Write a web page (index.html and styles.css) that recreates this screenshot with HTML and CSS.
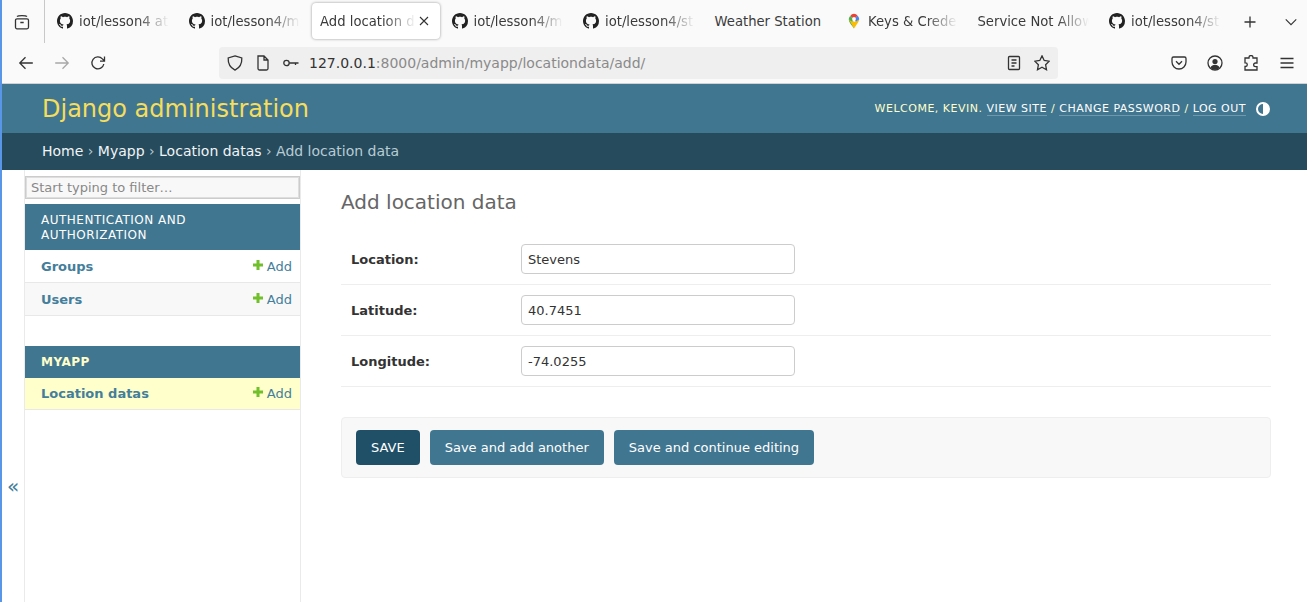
FILE: index.html
```html
<!DOCTYPE html>
<html lang="en">
<head>
<meta charset="utf-8">
<title>Add location data | Django site admin</title>
<link rel="stylesheet" href="styles.css">
</head>
<body>
<svg class="defs" width="0" height="0" aria-hidden="true">
  <symbol id="gh" viewBox="0 0 16 16"><path fill="#222" d="M8 0C3.58 0 0 3.58 0 8c0 3.54 2.29 6.53 5.47 7.59.4.07.55-.17.55-.38 0-.19-.01-.82-.01-1.49-2.01.37-2.53-.49-2.69-.94-.09-.23-.48-.94-.82-1.13-.28-.15-.68-.52-.01-.53.63-.01 1.08.58 1.23.82.72 1.21 1.87.87 2.33.66.07-.52.28-.87.51-1.07-1.78-.2-3.64-.89-3.64-3.95 0-.87.31-1.59.82-2.15-.08-.2-.36-1.02.08-2.12 0 0 .67-.21 2.2.82.64-.18 1.32-.27 2-.27.68 0 1.36.09 2 .27 1.53-1.04 2.2-.82 2.2-.82.44 1.1.16 1.92.08 2.12.51.56.82 1.27.82 2.15 0 3.07-1.87 3.75-3.65 3.95.29.25.54.73.54 1.48 0 1.07-.01 1.93-.01 2.2 0 .21.15.46.55.38A8.013 8.013 0 0016 8c0-4.42-3.58-8-8-8z"/></symbol>
  <symbol id="plus" viewBox="0 0 12 12"><path fill="#70bf2b" d="M4.500 1h3v3.500H11v3H7.500V11h-3V7.500H1v-3h3.500z"/></symbol>
</svg>
<div class="window">
  <header class="chrome">
    <div class="tabbar">
      <div class="views">
        <svg class="ico" viewBox="0 0 16 16"><path d="M3 2.500C4 1.200 12 1.200 13 2.500M3 4.800h10a1.500 1.500 0 0 1 1.500 1.500v7a1.500 1.500 0 0 1-1.500 1.500H3a1.500 1.500 0 0 1-1.500-1.500v-7A1.500 1.500 0 0 1 3 4.800zM6.300 8.500h3.400"/></svg>
      </div>
      <div class="tab"><svg class="fav"><use href="#gh"/></svg><span class="tt">iot/lesson4 at</span></div>
      <div class="tab"><svg class="fav"><use href="#gh"/></svg><span class="tt">iot/lesson4/m</span></div>
      <div class="tab active"><span class="tt">Add location d</span><svg class="close" viewBox="0 0 16 16"><path d="M4 4l8 8M12 4l-8 8"/></svg></div>
      <div class="tab"><svg class="fav"><use href="#gh"/></svg><span class="tt">iot/lesson4/m</span></div>
      <div class="tab"><svg class="fav"><use href="#gh"/></svg><span class="tt">iot/lesson4/st</span></div>
      <div class="tab"><span class="tt nofade">Weather Station</span></div>
      <div class="tab"><svg class="fav" viewBox="0 0 16 16"><path fill="#34a853" d="M8 15.500C6.800 13 3 10 2.800 6.500L8 9z"/><path fill="#fbbc04" d="M2.800 6.500 8 9l5.200-2.500C13 8 12 9.500 11 11L8 15.500z"/><path fill="#4285f4" d="M13.200 6.500c0-1.500-.6-2.800-1.600-3.700L8 6.500 10 8.500z"/><path fill="#ea4335" d="M8 .8c1.500 0 2.700.7 3.600 2L8 6.500 4.300 3C5.200 1.600 6.500.8 8 .8z"/><path fill="#4caf50" d="M4.300 3C3.300 3.900 2.800 5.100 2.800 6.500L5.800 8.600 8 6.500z"/><circle cx="8" cy="6" r="1.900" fill="#fff"/></svg><span class="tt">Keys &amp; Crede</span></div>
      <div class="tab"><span class="tt">Service Not Allow</span></div>
      <div class="tab"><svg class="fav"><use href="#gh"/></svg><span class="tt">iot/lesson4/st</span></div>
      <div class="tabctl">
        <svg class="ico" viewBox="0 0 16 16"><path d="M8 2.500v11M2.500 8h11"/></svg>
        <svg class="ico chev" viewBox="0 0 16 16"><path d="M2 5 8 11l6-6"/></svg>
      </div>
    </div>
    <div class="toolbar">
      <div class="nav-btns">
        <svg class="ico" viewBox="0 0 16 16"><path d="M14.800 8H1.800M7.500 2.300 1.800 8l5.700 5.700"/></svg>
        <svg class="ico dim" viewBox="0 0 16 16"><path d="M1.200 8h13M8.500 2.300 14.200 8l-5.700 5.700"/></svg>
        <svg class="ico" viewBox="0 0 16 16"><path d="M13.800 9a6 6 0 1 1-1.400-5.100L14.500 6M14.500 1.500V6.200H10"/></svg>
      </div>
      <div class="urlbar">
        <svg class="ico" viewBox="0 0 16 16"><path d="M8 .9 14.800 3c.3 5.500-1.800 9.600-6.800 12.100C3 12.600.9 8.500 1.200 3z"/></svg>
        <svg class="ico" viewBox="0 0 16 16"><path d="M3 1h6l4 4v8.500a1.500 1.500 0 0 1-1.500 1.500h-7A1.500 1.500 0 0 1 3 13.500zM9 1v4h4"/></svg>
        <svg class="ico" viewBox="0 0 16 16"><circle cx="3.500" cy="8" r="2.700"/><path d="M6.200 8h9.300M12.500 8v2"/></svg>
        <div class="url"><span class="host">127.0.0.1</span>:8000/admin/myapp/locationdata/add/</div>
        <svg class="ico" viewBox="0 0 16 16"><path d="M3.500 1.500h9a1 1 0 0 1 1 1v11a1 1 0 0 1-1 1h-9a1 1 0 0 1-1-1v-11a1 1 0 0 1 1-1zM5.500 5h5M5.500 8h5M5.500 11h3"/></svg>
        <svg class="ico" viewBox="0 0 16 16"><path d="M8 .9l2.200 4.600 5 .7-3.600 3.500.9 5L8 12.300l-4.500 2.400.9-5L.8 6.200l5-.7z"/></svg>
      </div>
      <div class="tools">
        <svg class="ico" viewBox="0 0 16 16"><path d="M2.500 2h11A1.500 1.500 0 0 1 15 3.500V7a7 7 0 0 1-14 0V3.500A1.500 1.500 0 0 1 2.500 2zM5 6.300 8 9.300l3-3"/></svg>
        <svg class="ico" viewBox="0 0 16 16"><circle cx="8" cy="8" r="7"/><circle class="solid" cx="8" cy="6.500" r="2.600"/><path class="solid" d="M3.500 12.500c.8-2 2.500-2.800 4.500-2.800s3.700.8 4.500 2.800C11.300 14 9.700 14.700 8 14.700s-3.300-.7-4.500-2.200z"/></svg>
        <svg class="ico" viewBox="0 0 16 16"><path d="M6 3V2.500a2 2 0 0 1 4 0V3h4v5h-1.500a1.800 1.800 0 0 0 0 3.700H14v3.300H2v-3.500h.5a1.800 1.800 0 0 0 0-3.600H2V3z"/></svg>
        <svg class="ico" viewBox="0 0 16 16"><path d="M1.500 3.500h13M1.500 8h13M1.500 12.500h13"/></svg>
      </div>
    </div>
  </header>

  <div class="admin">
    <div class="branding">
      <a class="site-name">Django administration</a>
      <div class="user-tools">
        <span class="welcome">Welcome, <strong>Kevin</strong>.</span>
        <a class="utl">View site</a> / <a class="utl">Change password</a> / <a class="utl">Log out</a>
        <svg class="theme" viewBox="0 0 16 16"><circle cx="8" cy="8" r="6" fill="none" stroke="#fff" stroke-width="2"/><path fill="#fff" d="M8 2a6 6 0 0 1 0 12z"/></svg>
      </div>
    </div>
    <div class="breadcrumbs"><a>Home</a> › <a>Myapp</a> › <a>Location datas</a> › <span class="crumb-now">Add location data</span></div>

    <div class="main">
      <div class="toggle">«</div>
      <aside class="sidebar">
        <input class="filter" placeholder="Start typing to filter…">
        <section class="module">
          <div class="caption">Authentication and Authorization</div>
          <div class="row"><a class="model">Groups</a><a class="addlink"><svg class="plus"><use href="#plus"/></svg>Add</a></div>
          <div class="row alt"><a class="model">Users</a><a class="addlink"><svg class="plus"><use href="#plus"/></svg>Add</a></div>
        </section>
        <section class="module">
          <div class="caption current">Myapp</div>
          <div class="row selected"><a class="model">Location datas</a><a class="addlink"><svg class="plus"><use href="#plus"/></svg>Add</a></div>
        </section>
      </aside>
      <main class="content">
        <h1 class="title">Add location data</h1>
        <form class="form">
          <div class="form-row"><label class="lbl">Location:</label><input class="field" value="Stevens"></div>
          <div class="form-row"><label class="lbl">Latitude:</label><input class="field" value="40.7451"></div>
          <div class="form-row"><label class="lbl">Longitude:</label><input class="field" value="-74.0255"></div>
          <div class="submit-row">
            <button type="button" class="btn default">SAVE</button>
            <button type="button" class="btn">Save and add another</button>
            <button type="button" class="btn">Save and continue editing</button>
          </div>
        </form>
      </main>
    </div>
  </div>
</div>
</body>
</html>
```

FILE: styles.css
```css
* { box-sizing: border-box; }
html, body { margin: 0; height: 100%; overflow: hidden; }
body { font-family: "DejaVu Sans", sans-serif; background: #fff; color: #333; }
.defs { position: absolute; }
.window { height: 602px; border-left: 2px solid #5a96e8; overflow: hidden; }

.chrome { height: 84px; background: #fafafa; border-bottom: 1px solid #d2d2d4; color: #3a3a3a; font-size: 13.200px; }
.ico { width: 16px; height: 16px; fill: none; stroke: #333; stroke-width: 1.300; flex: none; }
.ico.dim { stroke: #a8a8a8; }
.ico .solid { fill: #333; stroke: none; }

.tabbar { display: flex; height: 43px; }
.views { width: 43px; border-right: 1px solid #c8c8c8; display: flex; align-items: center; justify-content: center; padding-right: 2px; }
.tab { flex: 0 0 127.500px; padding: 0 8px; margin: 3px 2px 4px; display: flex; align-items: center; gap: 6px; border-radius: 4px; min-width: 0; }
.tab.active { background: #fff; box-shadow: 0 0 3px rgba(0,0,0,.4); gap: 0; }
.views + .tab { margin-left: 4px; }
.fav { width: 16px; height: 16px; flex: none; }
.tt { flex: 1; min-width: 0; white-space: nowrap; -webkit-mask-image: linear-gradient(to left, transparent 0, #000 32px); mask-image: linear-gradient(to left, transparent 0, #000 32px); }
.tt.nofade { -webkit-mask-image: none; mask-image: none; }
.close { width: 16px; height: 16px; flex: none; fill: none; stroke: #333; stroke-width: 1.100; }
.tabctl { flex: 1; display: flex; align-items: center; justify-content: space-between; padding: 0 9px 0 11px; }
.tabctl .chev { width: 14px; height: 14px; }

.toolbar { height: 40px; display: flex; align-items: center; }
.nav-btns { display: flex; gap: 20px; width: 217px; padding-left: 16px; }
.urlbar { width: 839px; height: 32px; background: #efefef; border-radius: 4px; display: flex; align-items: center; padding: 0 8px; gap: 12px; }
.url { flex: 1; font-size: 14px; color: #8a8a8a; white-space: nowrap; margin-left: -2px; }
.host { color: #333; }
.tools { display: flex; gap: 20px; margin-left: 113px; }

.branding { height: 49px; background: #417690; display: flex; align-items: center; justify-content: space-between; padding: 0 36px 0 40px; }
.site-name { font-size: 24px; color: #f5dd5d; }
.user-tools { font-size: 11px; letter-spacing: .5px; text-transform: uppercase; color: #ffc; display: flex; align-items: center; white-space: pre; }
.welcome { margin-right: 4px; }
.welcome strong { font-weight: 400; }
.utl { color: #fff; border-bottom: 1px solid rgba(255,255,255,.25); line-height: 13px; }
.theme { width: 16px; height: 16px; margin-left: 9px; }

.breadcrumbs { height: 37px; background: #264b5d; padding: 10px 40px; font-size: 14px; line-height: 17px; color: #b6c7cf; }
.breadcrumbs a { color: #f0f4f6; }
.crumb-now { color: #b8cbd5; }

.main { display: flex; align-items: flex-start; }
.toggle { width: 22px; height: 632px; display: flex; align-items: center; justify-content: center; color: #447e9b; font-size: 20px; flex: none; }
.sidebar { width: 277px; height: 632px; border-left: 1px solid #eaeaea; border-right: 1px solid #eaeaea; flex: none; padding-top: 6px; font-size: 13px; }
.filter { display: block; width: 100%; height: 23px; padding: 2px 5px; border: 1px solid #ccc; outline: 1px solid #dedede; outline-offset: -2px; border-radius: 0; background: #f8f8f8; font: 13px "DejaVu Sans", sans-serif; margin-bottom: 5px; }
.filter::placeholder { color: #888; opacity: 1; }
.module { margin-bottom: 30px; }
.caption { background: #417690; color: #fff; font-size: 12px; letter-spacing: .5px; line-height: 15px; text-transform: uppercase; padding: 9px 16px 7px; }
.caption.current { color: #ffc; font-weight: 700; padding: 9px 16px 8px; }
.row { display: flex; justify-content: space-between; align-items: center; height: 33px; padding: 0 8px 0 16px; border-bottom: 1px solid #e8e8e8; }
.row.alt { background: #f8f8f8; }
.row.selected { background: #ffc; height: 32px; padding-bottom: 1px; }
.model { color: #447e9b; font-weight: 700; }
.addlink { color: #447e9b; display: flex; align-items: center; gap: 3px; }
.plus { width: 12px; height: 12px; margin-top: -2px; }

.content { flex: 1; padding: 20px 36px 0 40px; min-width: 0; }
.title { margin: 0 0 20px; font-size: 20px; line-height: 24px; font-weight: 400; color: #666; }
.form-row { display: flex; align-items: center; height: 51px; padding: 0 10px; border-bottom: 1px solid #eee; font-size: 13px; }
.lbl { width: 170px; font-weight: 700; color: #333; }
.field { width: 274px; height: 30px; padding: 5px 6px; border: 1px solid #ccc; border-radius: 4px; font: 13px "DejaVu Sans", sans-serif; color: #333; background: #fff; }
.submit-row { margin-top: 30px; height: 61px; display: flex; gap: 10px; padding: 12px 14px; background: #f8f8f8; border: 1px solid #eee; border-radius: 4px; }
.btn { height: 35px; padding: 0 15px; border: 0; border-radius: 4px; background: #417690; color: #fff; font: 13px "DejaVu Sans", sans-serif; }
.btn.default { background: #205067; }
```
